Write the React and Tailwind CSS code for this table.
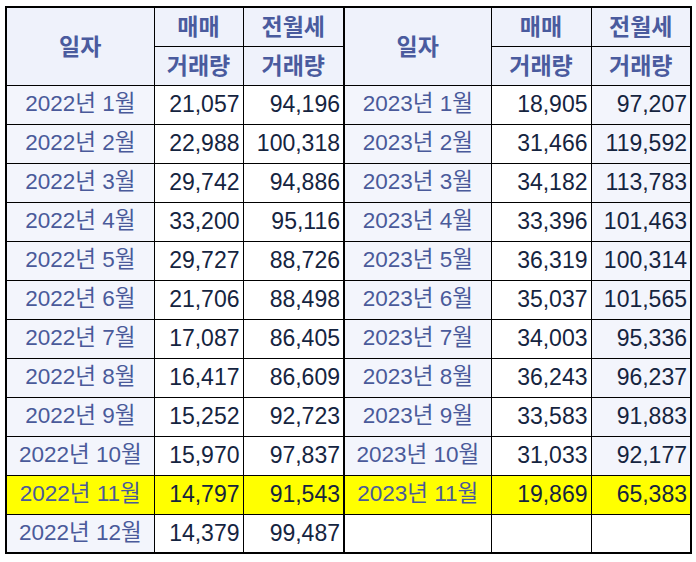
import React from "react";

const left = [
  ["2022년 1월", "21,057", "94,196"],
  ["2022년 2월", "22,988", "100,318"],
  ["2022년 3월", "29,742", "94,886"],
  ["2022년 4월", "33,200", "95,116"],
  ["2022년 5월", "29,727", "88,726"],
  ["2022년 6월", "21,706", "88,498"],
  ["2022년 7월", "17,087", "86,405"],
  ["2022년 8월", "16,417", "86,609"],
  ["2022년 9월", "15,252", "92,723"],
  ["2022년 10월", "15,970", "97,837"],
  ["2022년 11월", "14,797", "91,543"],
  ["2022년 12월", "14,379", "99,487"],
];

const right = [
  ["2023년 1월", "18,905", "97,207"],
  ["2023년 2월", "31,466", "119,592"],
  ["2023년 3월", "34,182", "113,783"],
  ["2023년 4월", "33,396", "101,463"],
  ["2023년 5월", "36,319", "100,314"],
  ["2023년 6월", "35,037", "101,565"],
  ["2023년 7월", "34,003", "95,336"],
  ["2023년 8월", "36,243", "96,237"],
  ["2023년 9월", "33,583", "91,883"],
  ["2023년 10월", "31,033", "92,177"],
  ["2023년 11월", "19,869", "65,383"],
  null,
];

const font = { fontFamily: '"Liberation Sans", Arial, "Noto Sans CJK KR", sans-serif' };

const th = "border border-black bg-[#eff2fb] text-[#4a5b9e] font-bold text-[23px] leading-none text-center p-0 pt-[2px]";
const dateCell = "border border-black text-[#4a5a9a] text-[22.5px] leading-none text-center p-0";
const numCell = "border border-black text-[#15243f] text-[23px] leading-none text-right pr-[3px] pl-0";

export default function App() {
  return (
    <div className="bg-white w-[696px] h-[562px] pt-[6px] pl-[5px]" style={font}>
      <table className="border-collapse table-fixed border-2 border-black w-[687px]">
        <colgroup>
          <col className="w-[148px]" />
          <col className="w-[89px]" />
          <col className="w-[101px]" />
          <col className="w-[147px]" />
          <col className="w-[100px]" />
          <col className="w-[100px]" />
        </colgroup>
        <thead>
          <tr className="h-[39px]">
            <th rowSpan={2} className={th}>일자</th>
            <th className={th}>매매</th>
            <th className={`${th} border-r-2`}>전월세</th>
            <th rowSpan={2} className={th}>일자</th>
            <th className={th}>매매</th>
            <th className={th}>전월세</th>
          </tr>
          <tr className="h-[39px]">
            <th className={th}>거래량</th>
            <th className={`${th} border-r-2`}>거래량</th>
            <th className={th}>거래량</th>
            <th className={th}>거래량</th>
          </tr>
        </thead>
        <tbody>
          {left.map((l, i) => {
            const r = right[i];
            const hi = i === 10;
            return (
              <tr key={i} className="h-[39px]">
                <td className={`${dateCell} ${hi ? "bg-[#ffff00]" : "bg-[#f3f5fc]"}`}>{l[0]}</td>
                <td className={`${numCell} ${hi ? "bg-[#ffff00]" : "bg-white"}`}>{l[1]}</td>
                <td className={`${numCell} border-r-2 ${hi ? "bg-[#ffff00]" : "bg-white"}`}>{l[2]}</td>
                <td className={`${dateCell} ${hi ? "bg-[#ffff00]" : r ? "bg-[#f3f5fc]" : "bg-white"}`}>{r ? r[0] : ""}</td>
                <td className={`${numCell} ${hi ? "bg-[#ffff00]" : "bg-white"}`}>{r ? r[1] : ""}</td>
                <td className={`${numCell} ${hi ? "bg-[#ffff00]" : r ? "bg-[#f3f5fc]" : "bg-white"}`}>{r ? r[2] : ""}</td>
              </tr>
            );
          })}
        </tbody>
      </table>
    </div>
  );
}
